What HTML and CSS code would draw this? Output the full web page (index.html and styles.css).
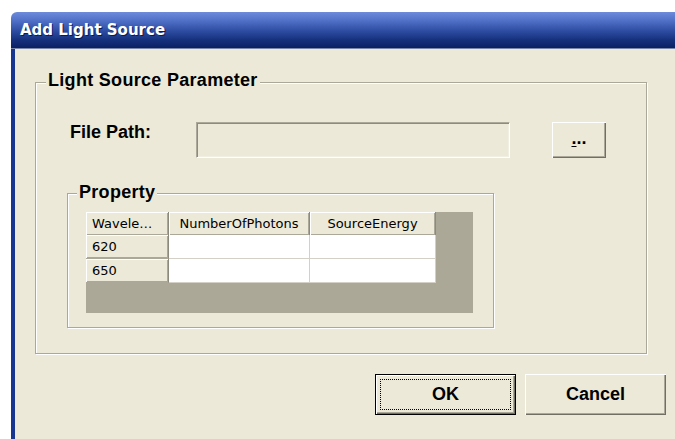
FILE: index.html
```html
<!DOCTYPE html>
<html lang="en">
<head>
<meta charset="utf-8">
<title>Add Light Source</title>
<link rel="stylesheet" href="styles.css">
</head>
<body>
<div class="window">
  <div class="titlebar">Add Light Source</div>
  <div class="client">
    <div class="group outer">
      <div class="legend">Light Source Parameter</div>
      <div class="path-row">
        <span class="label">File Path:</span>
        <div class="textbox"></div>
        <button class="btn browse" type="button"><u>.</u>..</button>
      </div>
      <div class="group inner">
        <div class="legend legend-small">Property</div>
        <div class="grid">
          <div class="hdr first">Wavele…</div>
          <div class="hdr">NumberOfPhotons</div>
          <div class="hdr">SourceEnergy</div>
          <div class="rowhdr">620</div>
          <div class="cell"></div>
          <div class="cell"></div>
          <div class="rowhdr">650</div>
          <div class="cell"></div>
          <div class="cell"></div>
        </div>
      </div>
    </div>
    <div class="actions">
      <button class="btn push default" type="button"><span class="focus">OK</span></button>
      <button class="btn push" type="button"><span class="nofocus">Cancel</span></button>
    </div>
  </div>
</div>
</body>
</html>
```

FILE: styles.css
```css
html, body {
  margin: 0;
  padding: 0;
  background: #ffffff;
  overflow: hidden;
  width: 675px;
  height: 439px;
}

/* the dialog runs on past the right and bottom edges of the page */
.window {
  margin: 12px 0 0 11px;
  width: 664px;
  border-top-left-radius: 6px;
  overflow: hidden;
}

.titlebar {
  height: 36px;
  line-height: 36px;
  padding-left: 9px;
  border-bottom: 1px solid #7a86a8;
  background: linear-gradient(#6e8bdb 0%, #5273c9 22%, #2e4da3 52%, #15307c 78%, #0b2063 100%);
  color: #ffffff;
  font-family: "DejaVu Sans", sans-serif;
  font-weight: bold;
  font-size: 15px;
  text-shadow: 1px 1px 0 #0a1a55;
}

.client {
  box-sizing: border-box;
  background: #ece9d8;
  border-left: 4px solid #17368f;
  height: 390px;
  padding-top: 33px;
  font-family: "Liberation Sans", Arial, sans-serif;
  font-size: 18px;
  font-weight: bold;
  color: #000000;
}

/* etched group frames */
.group {
  box-sizing: border-box;
  border: 1px solid #aca899;
  box-shadow: inset 1px 1px 0 #ffffff, 1px 1px 0 #ffffff;
}

.outer {
  margin-left: 20px;
  width: 612px;
  height: 272px;
}

.legend {
  width: fit-content;
  margin: -13px 0 0 10px;
  padding: 0 2px;
  line-height: 20px;
  background: #ece9d8;
  letter-spacing: 0.3px;
}

.legend-small {
  margin: -12px 0 0 9px;
}

.path-row {
  display: flex;
  align-items: flex-start;
  margin-top: 32px;
  padding-left: 34px;
}

.label {
  width: 126px;
  line-height: 20px;
}

.textbox {
  box-sizing: border-box;
  width: 314px;
  height: 36px;
  background: #ece9d8;
  border-top: 1px solid #aca899;
  border-left: 1px solid #aca899;
  border-right: 1px solid #ffffff;
  border-bottom: 1px solid #ffffff;
  box-shadow: inset 1px 1px 0 #8e8b7b, inset -1px -1px 0 #f1efe2;
}

.btn {
  box-sizing: border-box;
  margin: 0;
  padding: 0;
  background: #ece9d8;
  border: none;
  font-family: "Liberation Sans", Arial, sans-serif;
  font-weight: bold;
  font-size: 18px;
  color: #000000;
  box-shadow: inset 1px 1px 0 #ffffff, inset -1px -1px 0 #716f64, inset -2px -2px 0 #aca899;
}

.browse {
  margin-left: 42px;
  width: 54px;
  height: 36px;
  line-height: 20px;
  padding-bottom: 4px;
}

.browse u {
  text-decoration-thickness: 1px;
  text-underline-offset: 2px;
}

.inner {
  margin: 35px 0 0 31px;
  width: 427px;
  height: 135px;
}

/* data grid */
.grid {
  margin: 10px 0 0 18px;
  width: 387px;
  height: 101px;
  background: #aba898;
  display: grid;
  grid-template-columns: 83px 141px 126px;
  grid-template-rows: 23px 24px 24px;
  align-content: start;
  font-family: "DejaVu Sans", sans-serif;
  font-weight: normal;
  font-size: 13px;
}

.hdr, .rowhdr {
  box-sizing: border-box;
  background: #ece9d8;
  box-shadow: inset 1px 1px 0 #ffffff, inset -1px -1px 0 #aca899;
  border-right: 1px solid #8c8a7c;
  line-height: 23px;
  white-space: nowrap;
  overflow: hidden;
}

.hdr {
  text-align: center;
}

.hdr.first, .rowhdr {
  text-align: left;
  padding-left: 6px;
}

.rowhdr {
  line-height: 24px;
  border-bottom: 1px solid #aca899;
}

.cell {
  background: #ffffff;
  border-right: 1px solid #d4d0c8;
  border-bottom: 1px solid #d4d0c8;
}

.actions {
  display: flex;
  gap: 9px;
  margin: 20px 0 0 360px;
}

.push {
  width: 141px;
  height: 41px;
  display: flex;
  padding: 5px;
}

.default {
  border: 1px solid #000000;
  padding: 4px;
}

.focus, .nofocus {
  flex: 1;
  display: flex;
  align-items: center;
  justify-content: center;
}

.focus {
  border: 1px dotted #000000;
}
```
